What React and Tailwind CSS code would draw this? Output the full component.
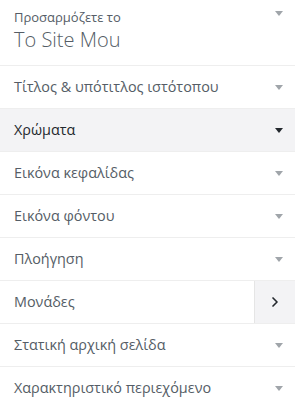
import { ChevronRight } from 'lucide-react';

const sections = [
  { label: 'Τίτλος & υπότιτλος ιστότοπου' },
  { label: 'Χρώματα', active: true },
  { label: 'Εικόνα κεφαλίδας' },
  { label: 'Εικόνα φόντου' },
  { label: 'Πλοήγηση' },
  { label: 'Μονάδες', panel: true },
  { label: 'Στατική αρχική σελίδα' },
  { label: 'Χαρακτηριστικό περιεχόμενο' },
];

const Arrow = ({ dark }) => (
  <svg width="8" height="5" viewBox="0 0 8 5" className="shrink-0">
    <path d="M0 0h8L4 5z" fill={dark ? '#23282d' : '#a0a5aa'} />
  </svg>
);

export default function App() {
  return (
    <div className="w-[295px] h-[409px] bg-white overflow-hidden" style={{ fontFamily: '"Open Sans", sans-serif' }}>
      {/* Header */}
      <div className="h-[66px] flex justify-between pl-[14px] pr-[12px] pt-[8px] border-b border-[#eeeeee]">
        <div>
          <div className="text-[13px] leading-[18px] text-[#555d66]">Προσαρμόζετε το</div>
          <div className="text-[20px] leading-[28px] font-light text-[#555d66]">To Site Mou</div>
        </div>
        <div className="pt-[3px]">
          <Arrow />
        </div>
      </div>

      {sections.map((s) => (
        <div
          key={s.label}
          className={`h-[43px] flex items-center border-b border-[#eeeeee] ${s.active ? 'bg-[#f3f3f5]' : ''}`}
        >
          <span className={`flex-1 pl-[14px] text-[14.4px] ${s.active ? 'text-[#23282d]' : 'text-[#555d66]'}`}>
            {s.label}
          </span>
          {s.panel ? (
            <div className="w-[41px] h-full flex items-center justify-center bg-[#f3f3f5] border-l border-[#e5e5e5]">
              <ChevronRight className="w-[16px] h-[16px] text-[#23282d]" strokeWidth={2.5} />
            </div>
          ) : (
            <div className="pr-[12px]">
              <Arrow dark={s.active} />
            </div>
          )}
        </div>
      ))}
    </div>
  );
}
